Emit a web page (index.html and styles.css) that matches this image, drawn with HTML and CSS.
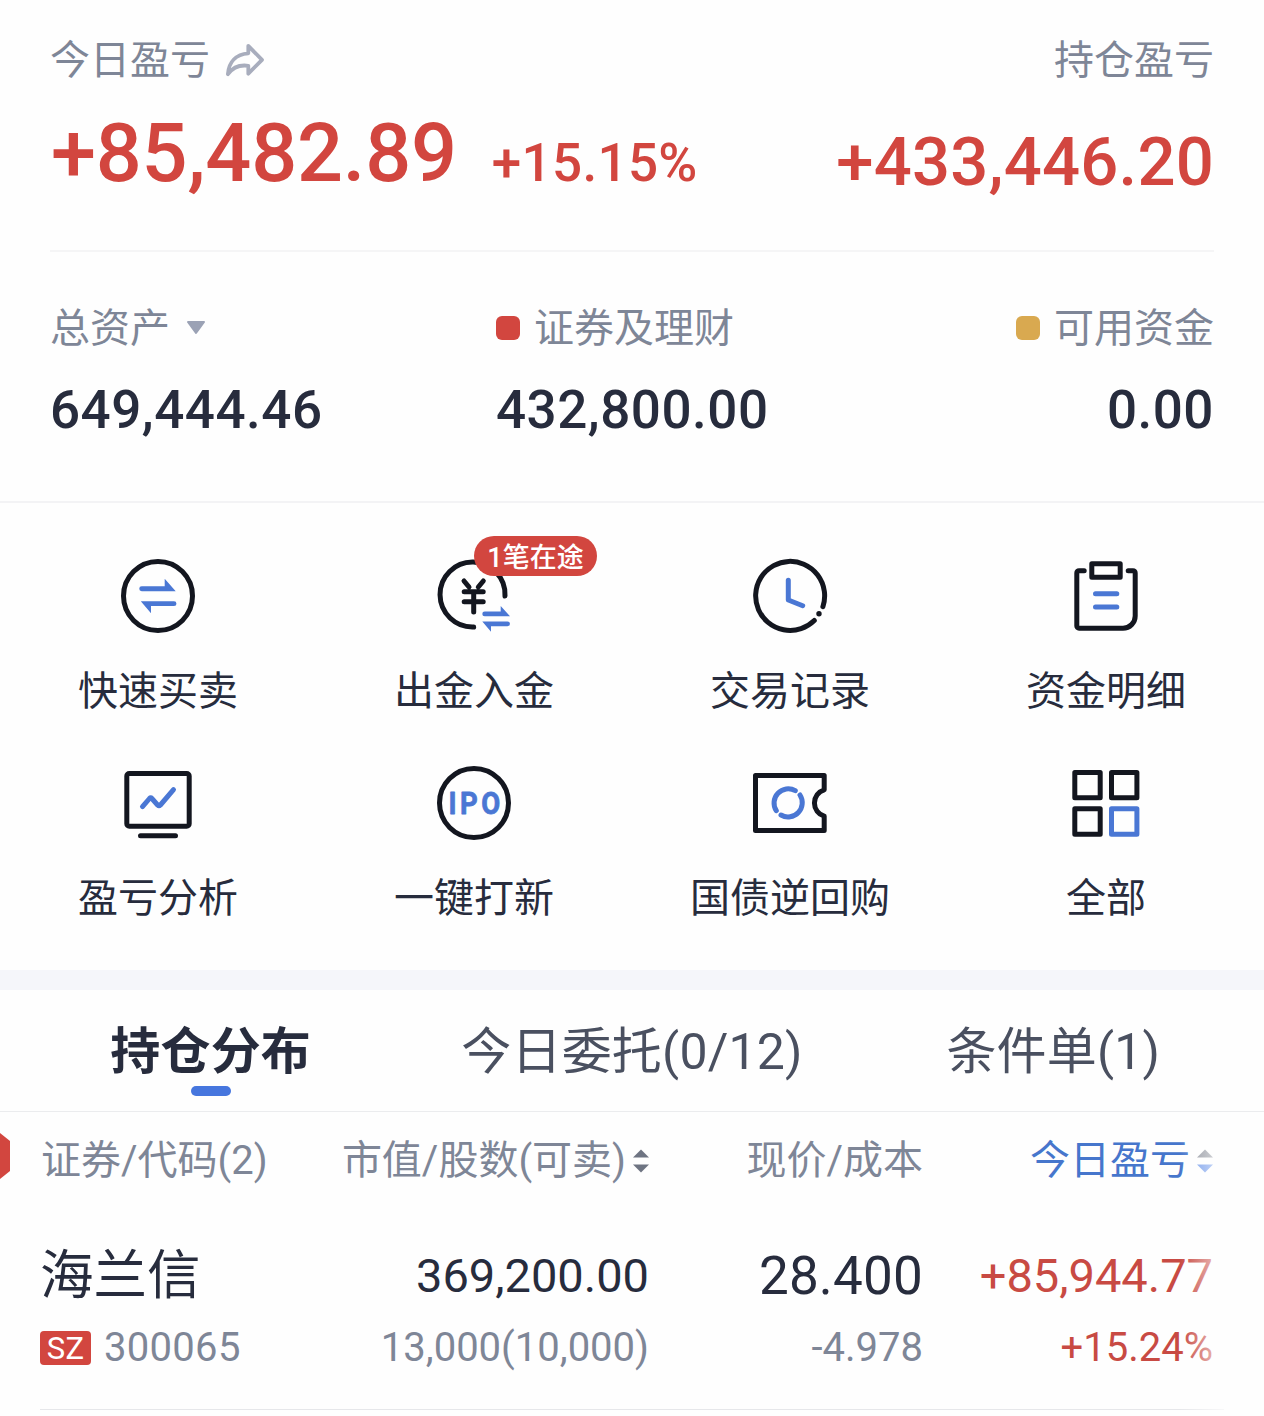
FILE: index.html
```html
<!DOCTYPE html>
<html lang="zh-CN">
<head>
    <meta charset="UTF-8">
    <meta name="viewport" content="width=device-width, initial-scale=1.0">
    <title>持仓</title>
    <link rel="stylesheet" href="styles.css">
</head>
<body>
    <section class="profit">
        <div class="profit-today">
            <div class="label">今日盈亏
                <svg class="share" viewBox="0 0 40 36"><path d="M23.3 3.8 L37 17.8 L23.3 31.7 V23.8 C14 22.5 8 25 2.9 32.2 C3.7 20 11 12.3 23.3 11.3 Z"/></svg>
            </div>
            <div class="profit-values">
                <span class="profit-main">+85,482.89</span>
                <span class="profit-rate">+15.15%</span>
            </div>
        </div>
        <div class="profit-hold">
            <div class="label">持仓盈亏</div>
            <div class="profit-total">+433,446.20</div>
        </div>
    </section>

    <section class="assets">
        <div class="asset">
            <div class="label">总资产<svg class="caret" viewBox="0 0 20 16"><path d="M2 2 H18 L10 13 Z"/></svg></div>
            <div class="amount">649,444.46</div>
        </div>
        <div class="asset">
            <div class="label"><i class="dot dot-red"></i>证券及理财</div>
            <div class="amount">432,800.00</div>
        </div>
        <div class="asset asset-right">
            <div class="label"><i class="dot dot-gold"></i>可用资金</div>
            <div class="amount">0.00</div>
        </div>
    </section>

    <nav class="menu">
        <a class="menu-item">
            <svg class="icon" viewBox="0 0 80 80">
                <circle class="line" cx="40" cy="40" r="34.5"/>
                <path class="fill-blue" d="M23.7 30.3 H46.7 V22.8 L57.7 35.2 H23.7 a2.45 2.45 0 0 1 0-4.9z M56 45.2 H22.8 L33 57.3 V50.1 H56 a2.45 2.45 0 0 0 0-4.9z"/>
            </svg>
            <span>快速买卖</span>
        </a>
        <a class="menu-item">
            <div class="icon-wrap">
                <svg class="icon" viewBox="0 0 80 80">
                    <path class="line" d="M71 40 A32.5 32.5 0 1 0 39.7 71"/>
                    <path class="line" d="M30 25 l5 6 M49.3 25 l-5 6 M30.2 35.7 H49.2 M30.2 45.7 H49.2 M39.7 35.7 V56"/>
                    <path class="fill-blue" d="M50.7 55.5 H66.7 V50 L76 60.3 H50.7 a2.4 2.4 0 0 1 0-4.8z M73.5 65.4 H48.3 L57 75.7 V70.3 H73.5 a2.45 2.45 0 0 0 0-4.9z"/>
                </svg>
                <span class="badge">1笔在途</span>
            </div>
            <span>出金入金</span>
        </a>
        <a class="menu-item">
            <svg class="icon" viewBox="0 0 80 80">
                <path class="line" d="M72.9 50.7 A34.5 34.5 0 1 0 64.3 64.5"/>
                <circle cx="69" cy="57.7" r="2.7" fill="#13161f"/>
                <path class="line blue" d="M38.3 24.3 V44 L52.7 49.7"/>
            </svg>
            <span>交易记录</span>
        </a>
        <a class="menu-item">
            <svg class="icon" viewBox="0 0 80 80">
                <rect class="line" x="25.8" y="7.8" width="28.4" height="13.4"/>
                <path class="line" d="M18.2 14.7 H13 a2.2 2.2 0 0 0-2.2 2.2 V70 a2.2 2.2 0 0 0 2.2 2.2 H57 a12.2 12.2 0 0 0 12.2-12.2 V16.9 a2.2 2.2 0 0 0-2.2-2.2 H62.2"/>
                <path class="line blue" d="M29.5 37.7 H50.8 M29.5 51 H50.8"/>
            </svg>
            <span>资金明细</span>
        </a>
        <a class="menu-item">
            <svg class="icon" viewBox="0 0 80 80">
                <rect class="line" x="8.8" y="10.5" width="62.4" height="52.7" rx="2.5"/>
                <path class="line" d="M22.5 72.7 H57.5"/>
                <path class="line blue" d="M24.5 43.7 L31.5 35.5 Q32.7 34.2 33.9 35.5 L39.6 42 Q41 43.4 42.4 42 L55.5 26.7"/>
            </svg>
            <span>盈亏分析</span>
        </a>
        <a class="menu-item">
            <svg class="icon" viewBox="0 0 80 80">
                <circle class="line" cx="40" cy="40" r="34.5"/>
                <text class="ipo" x="17" y="51.5" textLength="60" transform="scale(0.86 1)">IPO</text>
            </svg>
            <span>一键打新</span>
        </a>
        <a class="menu-item">
            <svg class="icon" viewBox="0 0 80 80">
                <path class="line" d="M5.5 12.5 H74.2 V26.8 A13.8 13.8 0 0 0 74.2 53.2 V67.5 H5.5 Z"/>
                <path class="line blue" d="M50 32 A14.2 14.2 0 0 1 31 52 M26.3 47.7 A14.2 14.2 0 0 1 45.3 27.7"/>
            </svg>
            <span>国债逆回购</span>
        </a>
        <a class="menu-item">
            <svg class="icon" viewBox="0 0 80 80">
                <rect class="line" x="8.8" y="9.5" width="25.4" height="25.2"/>
                <rect class="line" x="45.5" y="9.5" width="25.4" height="25.2"/>
                <rect class="line" x="8.8" y="45.8" width="25.4" height="25.4"/>
                <rect class="line blue" x="45.5" y="45.8" width="25.4" height="25.4"/>
            </svg>
            <span>全部</span>
        </a>
    </nav>

    <div class="tabs">
        <div class="tab active">持仓分布</div>
        <div class="tab">今日委托(0/12)</div>
        <div class="tab">条件单(1)</div>
    </div>

    <section class="holdings">
        <svg class="side-tag" viewBox="0 0 10 46"><path d="M0 0 L10 8 V38 L0 46 Z"/></svg>
        <div class="row head">
            <div>证券/代码(2)</div>
            <div>市值/股数(可卖)<svg class="sort" viewBox="0 0 16 24"><path d="M8 0.5 L16 8.5 H0 Z M8 23.5 L16 15.5 H0 Z"/></svg></div>
            <div>现价/成本</div>
            <div class="sorted">今日盈亏<svg class="sort" viewBox="0 0 16 24"><path class="up" d="M8 0.5 L16 8.5 H0 Z"/><path d="M8 23.5 L16 15.5 H0 Z"/></svg></div>
        </div>
        <div class="row first">
            <div class="name">海兰信</div>
            <div>369,200.00</div>
            <div class="price">28.400</div>
            <div class="up-text">+85,944.77</div>
        </div>
        <div class="row second">
            <div class="code"><span class="market">SZ</span>300065</div>
            <div>13,000(10,000)</div>
            <div>-4.978</div>
            <div class="up-text">+15.24%</div>
        </div>
        <div class="fade"></div>
    </section>
</body>
</html>
```

FILE: styles.css
```css
* {
    box-sizing: border-box;
}
body {
    margin: 0;
    width: 1264px;
    height: 1416px;
    overflow: hidden;
    background-color: #fefefe;
    color: #272c3d;
    font-family: Roboto, "Noto Sans CJK SC", sans-serif;
    font-size: 40px;
}
svg {
    display: block;
    flex-shrink: 0;
}
.label {
    display: flex;
    align-items: center;
    height: 40px;
    line-height: 41px;
    color: #7e8697;
    font-weight: 400;
}

/* profit */
.profit {
    display: flex;
    justify-content: space-between;
    margin: 0 50px;
    height: 252px;
    padding-top: 40px;
    border-bottom: 2px solid #f5f5f6;
    color: #d2463f;
    font-weight: 500;
}
.share {
    width: 40px;
    height: 36px;
    margin-left: 15px;
    fill: none;
    stroke: #a8adbd;
    stroke-width: 3.8;
    stroke-linejoin: round;
}
.profit-values {
    display: flex;
    align-items: baseline;
    gap: 35px;
    margin: 24px 0 0 1px;
    line-height: 100px;
}
.profit-main {
    font-size: 81px;
    letter-spacing: -0.2px;
}
.profit-rate {
    font-size: 53px;
    letter-spacing: 0.3px;
}
.profit-hold {
    display: flex;
    flex-direction: column;
    align-items: flex-end;
}
.profit-total {
    margin-top: 32px;
    font-size: 67px;
    line-height: 100px;
    letter-spacing: 0.2px;
}

/* assets */
.assets {
    display: grid;
    grid-template-columns: 446px 1fr auto;
    height: 251px;
    padding: 56px 50px 0;
    border-bottom: 2px solid #f3f3f5;
}
.asset-right {
    text-align: right;
}
.caret {
    width: 20px;
    height: 16px;
    margin-left: 16px;
    fill: #9ba2b5;
    stroke: #9ba2b5;
    stroke-width: 2;
    stroke-linejoin: round;
}
.dot {
    width: 24px;
    height: 24px;
    margin-right: 14px;
    border-radius: 6px;
}
.dot-red {
    background-color: #d2463f;
}
.dot-gold {
    background-color: #d9a950;
}
.amount {
    margin-top: 31px;
    font-size: 53px;
    font-weight: 500;
    line-height: 62px;
    letter-spacing: 0.5px;
}

/* menu */
.menu {
    display: grid;
    grid-template-columns: repeat(4, 1fr);
    grid-auto-rows: 207px;
    height: 467px;
    padding-top: 53px;
}
.menu-item {
    display: flex;
    flex-direction: column;
    align-items: center;
    gap: 35px;
    line-height: 41px;
}
.icon-wrap {
    position: relative;
}
.icon {
    width: 80px;
    height: 80px;
}
.line {
    fill: none;
    stroke: #13161f;
    stroke-width: 5;
    stroke-linecap: round;
    stroke-linejoin: round;
}
.blue {
    stroke: #4a77d4;
}
.fill-blue {
    fill: #4a77d4;
}
.ipo {
    fill: #4a77d4;
    stroke: #4a77d4;
    stroke-width: 0.8;
    stroke-linejoin: round;
    font-size: 32px;
    font-weight: 700;
}
.badge {
    position: absolute;
    left: 40px;
    top: -20px;
    width: 123px;
    height: 40px;
    border-radius: 20px;
    background-color: #d2463f;
    color: #fff;
    font-size: 27px;
    font-weight: 500;
    line-height: 44px;
    text-align: center;
    white-space: nowrap;
}

/* tabs */
.tabs {
    display: grid;
    grid-template-columns: repeat(3, 1fr);
    height: 142px;
    border-top: 20px solid #f5f6fa;
    border-bottom: 1px solid #ebecee;
}
.tab {
    display: flex;
    flex-direction: column;
    align-items: center;
    padding-top: 31px;
    color: #4a5060;
    font-size: 50px;
    line-height: 62px;
    letter-spacing: 0.2px;
}
.tab.active {
    color: #272c3d;
    font-weight: 700;
}
.tab.active::after {
    content: "";
    width: 40px;
    height: 10px;
    margin-top: 3px;
    border-radius: 5px;
    background-color: #4676de;
}

/* holdings */
.holdings {
    position: relative;
    height: 304px;
    padding-top: 18px;
}
.holdings::after {
    content: "";
    display: block;
    height: 1px;
    margin: 31px 40px 0;
    background-color: #e6e7ea;
}
.side-tag {
    position: absolute;
    left: 0;
    top: 21px;
    width: 10px;
    height: 46px;
    fill: #d2463f;
}
.row {
    display: grid;
    grid-template-columns: 260px 349px 274px 290px;
    padding-left: 40px;
}
.row > div {
    display: flex;
    align-items: center;
    justify-content: flex-end;
    white-space: nowrap;
}
.row > div:first-child {
    justify-content: flex-start;
}
.head {
    color: #7e8697;
    line-height: 62px;
}
.head > div:first-child {
    padding-left: 1px;
}
.head .sorted {
    color: #4676cc;
}
.sort {
    width: 16px;
    height: 24px;
    margin: 0 0 0 7px;
    fill: #6e7482;
}
.sorted .sort {
    fill: #6b95ea;
}
.sorted .sort .up {
    fill: #8a8e98;
}
.first {
    margin-top: 53px;
    font-size: 47px;
    line-height: 60px;
}
.name {
    font-size: 53.5px;
}
.first .name {
    line-height: 62px;
}
.price {
    font-size: 53px;
    letter-spacing: 0.2px;
}
.second {
    margin-top: 11px;
    color: #7e8697;
    line-height: 60px;
}
.code {
    letter-spacing: 0.3px;
}
.up-text {
    color: #c84a43;
}
.market {
    width: 51px;
    height: 34px;
    margin-right: 13px;
    border-radius: 4px;
    background-color: #d2463f;
    color: #fff;
    font-size: 31px;
    line-height: 35px;
    text-align: center;
}
.fade {
    position: absolute;
    top: 10px;
    right: 0;
    bottom: 0;
    width: 84px;
    background-image: linear-gradient(to right, rgba(254, 254, 254, 0), #fefefe 60px);
}
```
